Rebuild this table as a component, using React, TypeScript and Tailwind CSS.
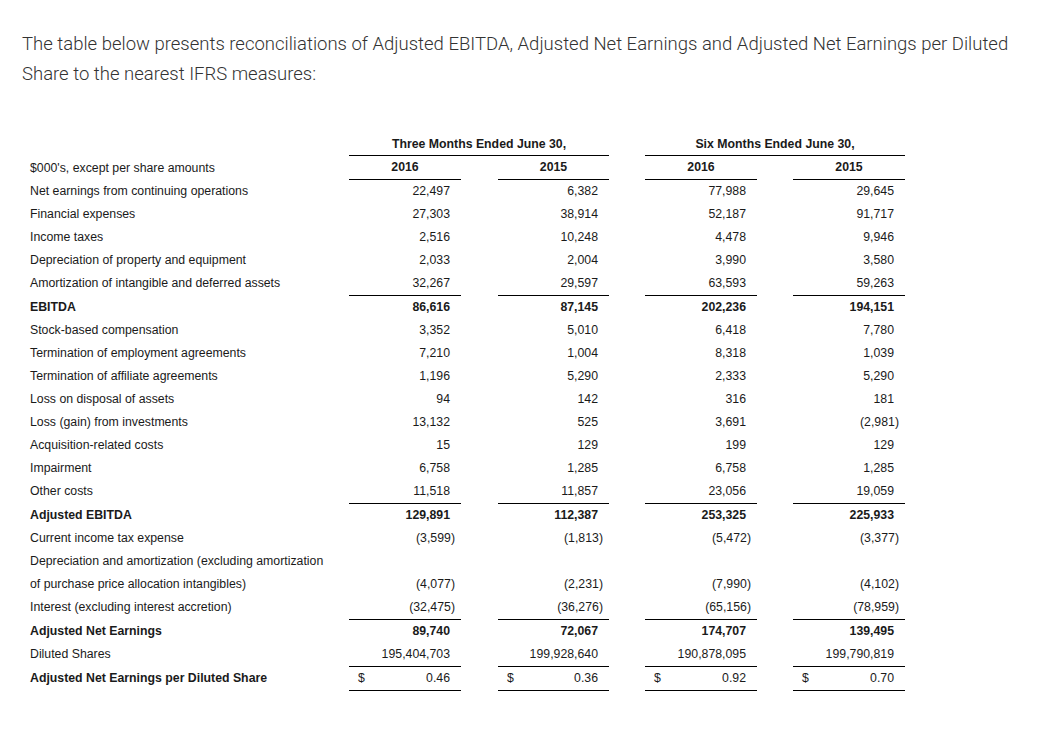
type Row = {
  label: string;
  values?: string[];
  bold?: boolean;
  line?: boolean;
  dollar?: boolean;
};

const rows: Row[] = [
  { label: "Net earnings from continuing operations", values: ["22,497", "6,382", "77,988", "29,645"] },
  { label: "Financial expenses", values: ["27,303", "38,914", "52,187", "91,717"] },
  { label: "Income taxes", values: ["2,516", "10,248", "4,478", "9,946"] },
  { label: "Depreciation of property and equipment", values: ["2,033", "2,004", "3,990", "3,580"] },
  { label: "Amortization of intangible and deferred assets", values: ["32,267", "29,597", "63,593", "59,263"], line: true },
  { label: "EBITDA", values: ["86,616", "87,145", "202,236", "194,151"], bold: true },
  { label: "Stock-based compensation", values: ["3,352", "5,010", "6,418", "7,780"] },
  { label: "Termination of employment agreements", values: ["7,210", "1,004", "8,318", "1,039"] },
  { label: "Termination of affiliate agreements", values: ["1,196", "5,290", "2,333", "5,290"] },
  { label: "Loss on disposal of assets", values: ["94", "142", "316", "181"] },
  { label: "Loss (gain) from investments", values: ["13,132", "525", "3,691", "(2,981)"] },
  { label: "Acquisition-related costs", values: ["15", "129", "199", "129"] },
  { label: "Impairment", values: ["6,758", "1,285", "6,758", "1,285"] },
  { label: "Other costs", values: ["11,518", "11,857", "23,056", "19,059"], line: true },
  { label: "Adjusted EBITDA", values: ["129,891", "112,387", "253,325", "225,933"], bold: true },
  { label: "Current income tax expense", values: ["(3,599)", "(1,813)", "(5,472)", "(3,377)"] },
  { label: "Depreciation and amortization (excluding amortization" },
  { label: "of purchase price allocation intangibles)", values: ["(4,077)", "(2,231)", "(7,990)", "(4,102)"] },
  { label: "Interest (excluding interest accretion)", values: ["(32,475)", "(36,276)", "(65,156)", "(78,959)"], line: true },
  { label: "Adjusted Net Earnings", values: ["89,740", "72,067", "174,707", "139,495"], bold: true },
  { label: "Diluted Shares", values: ["195,404,703", "199,928,640", "190,878,095", "199,790,819"], line: true },
  // only the label is bold on the last row
  { label: "Adjusted Net Earnings per Diluted Share", values: ["0.46", "0.36", "0.92", "0.70"], dollar: true, line: true },
];

const colW = ["w-[112px]", "w-[111px]", "w-[112px]", "w-[112px]"];
const gapW = ["w-[37px]", "w-[36px]", "w-[36px]"];

function Amount({ v }: { v: string }) {
  if (v.startsWith("(")) {
    return (
      <span>
        {v.slice(0, -1)}
        <span className="-mr-[5px]">)</span>
      </span>
    );
  }
  return <span>{v}</span>;
}

function Cell({ i, row }: { i: number; row: Row }) {
  return (
    <div
      className={`${colW[i]} h-full flex items-center justify-between pl-[9px] pr-[11px] ${
        row.bold ? "font-bold" : ""
      } ${row.line ? "border-b border-black" : ""}`}
    >
      <span>{row.dollar ? "$" : ""}</span>
      {row.values ? <Amount v={row.values[i]} /> : null}
    </div>
  );
}

export default function App() {
  return (
    <div className="w-[1041px] h-[744px] bg-white overflow-hidden">
      <p className="pl-[22px] pr-2 pt-[29px] text-[18.5px] leading-[30px] text-[#333] font-light [font-family:Roboto,'Noto_Sans',sans-serif]">
        The table below presents reconciliations of Adjusted EBITDA, Adjusted Net Earnings and Adjusted Net Earnings per Diluted Share to the nearest IFRS measures:
      </p>

      <div className="mt-[44px] pl-[30px] text-[12.3px] text-[#1a1a1a] [font-family:'Liberation_Sans',Arial,sans-serif]">
        {/* period headers */}
        <div className="flex h-[23px] font-bold">
          <div className="w-[319px]" />
          <div className="w-[260px] flex items-center justify-center border-b border-black">
            Three Months Ended June 30,
          </div>
          <div className="w-[36px]" />
          <div className="w-[260px] flex items-center justify-center border-b border-black">
            Six Months Ended June 30,
          </div>
        </div>

        {/* years */}
        <div className="flex h-[24px]">
          <div className="w-[319px] flex items-center">$000's, except per share amounts</div>
          {["2016", "2015", "2016", "2015"].map((y, i) => (
            <div key={i} className="contents">
              <div className={`${colW[i]} flex items-center justify-center font-bold border-b border-black`}>{y}</div>
              {i < 3 && <div className={gapW[i]} />}
            </div>
          ))}
        </div>

        {rows.map((row, r) => (
          <div key={r} className={`flex ${row.line ? "h-[24px]" : "h-[23px]"}`}>
            <div className={`w-[319px] flex items-center ${row.line ? "pb-px" : ""} ${row.bold || row.dollar ? "font-bold" : ""}`}>
              {row.label}
            </div>
            {[0, 1, 2, 3].map((i) => (
              <div key={i} className="contents">
                <Cell i={i} row={row} />
                {i < 3 && <div className={gapW[i]} />}
              </div>
            ))}
          </div>
        ))}
      </div>
    </div>
  );
}
